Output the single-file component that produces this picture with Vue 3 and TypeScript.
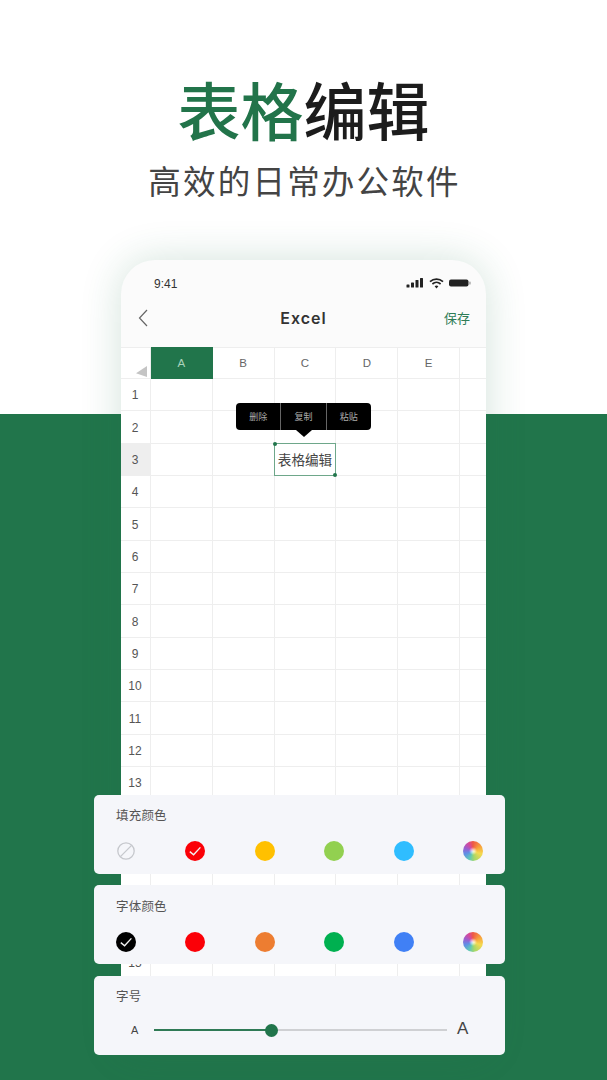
<script setup lang="ts">
const columns = ['', 'A', 'B', 'C', 'D', 'E', '']
const rows = ['1', '2', '3', '4', '5', '6', '7', '8', '9', '10', '11', '12', '13', '', '', '15', '', '']

const fillColors = ['none', '#fb0007', '#ffc000', '#92d050', '#2fbdff', 'wheel']
const fontColors = ['#000000', '#fb0007', '#ed7d31', '#00b050', '#4080f5', 'wheel']

const panels = [
  { title: '填充颜色', colors: fillColors, checked: 1 },
  { title: '字体颜色', colors: fontColors, checked: 0 },
]

const menu = ['删除', '复制', '粘贴']

function cellClass(col: number, row: string) {
  return {
    'row-head': col === 0,
    'row-active': col === 0 && row === '3',
    edge: col === 6,
  }
}
</script>

<template>
  <main class="page">
    <header class="hero">
      <h1 class="headline"><span class="accent">表格</span>编辑</h1>
      <p class="tagline">高效的日常办公软件</p>
    </header>

    <section class="phone">
      <div class="status">
        <span class="clock">9:41</span>
        <div class="status-icons">
          <svg width="18" height="10" viewBox="0 0 18 10">
            <rect x="0.5" y="6.5" width="3" height="3" rx="0.6" />
            <rect x="5" y="4.5" width="3" height="5" rx="0.6" />
            <rect x="9.5" y="2" width="3" height="7.5" rx="0.6" />
            <rect x="14" y="0" width="3" height="9.5" rx="0.6" />
          </svg>
          <svg width="15" height="11" viewBox="0 0 15 11" fill="none" stroke="#222" stroke-width="1.7">
            <path d="M1 3.6 C4.8 0.2 10.2 0.2 14 3.6" />
            <path d="M3.4 6 C5.8 3.9 9.2 3.9 11.6 6" />
            <path d="M7.5 10.4 L5.6 8.2 C6.7 7.3 8.3 7.3 9.4 8.2 Z" fill="#222" stroke="none" />
          </svg>
          <svg width="22" height="10" viewBox="0 0 22 10">
            <rect x="0" y="1.5" width="19.5" height="7" rx="2" />
            <rect x="20.3" y="3.5" width="1.3" height="3" rx="0.6" fill="#999" />
          </svg>
        </div>
      </div>

      <nav class="navbar">
        <svg class="back" width="10" height="18" viewBox="0 0 10 18" fill="none" stroke="#666" stroke-width="1.2">
          <path d="M9 1 L1.5 9 L9 17" />
        </svg>
        <span class="nav-title">Excel</span>
        <span class="save">保存</span>
      </nav>

      <div class="sheet">
        <div
          v-for="(col, i) in columns"
          :key="'h' + i"
          class="cell col-head"
          :class="{ 'col-active': col === 'A', edge: i === 6 }"
        >
          <span v-if="i === 0" class="corner"></span>
          {{ col }}
        </div>
        <template v-for="(row, r) in rows" :key="r">
          <div
            v-for="(col, i) in columns"
            :key="r + '-' + i"
            class="cell"
            :class="cellClass(i, row)"
          >
            <template v-if="i === 0">{{ row }}</template>
            <div v-else-if="col === 'C' && row === '3'" class="selected">
              <i class="handle handle-start"></i>
              表格编辑
              <i class="handle handle-end"></i>
            </div>
          </div>
        </template>

        <div class="menu">
          <span v-for="item in menu" :key="item" class="menu-item">{{ item }}</span>
          <i class="menu-arrow"></i>
        </div>
      </div>
    </section>

    <div class="panels">
      <section v-for="panel in panels" :key="panel.title" class="panel">
        <h2 class="panel-title">{{ panel.title }}</h2>
        <div class="swatches">
          <template v-for="(color, i) in panel.colors" :key="i">
            <svg v-if="color === 'none'" class="swatch" viewBox="0 0 20 20" fill="none" stroke="#c6c8cd" stroke-width="1.3">
              <circle cx="10" cy="10" r="8.2" />
              <path d="M4.4 15.6 L15.6 4.4" />
            </svg>
            <span v-else-if="color === 'wheel'" class="swatch wheel"></span>
            <span v-else class="swatch" :style="{ background: color }">
              <svg v-if="i === panel.checked" viewBox="0 0 20 20" fill="none" stroke="#f2f2f2" stroke-width="1.4">
                <path d="M4.8 10.6 L8.6 13.8 L15.4 6.4" />
              </svg>
            </span>
          </template>
        </div>
      </section>

      <section class="panel">
        <h2 class="panel-title">字号</h2>
        <div class="slider-row">
          <span class="size-small">A</span>
          <div class="track">
            <div class="track-fill"></div>
            <div class="knob"></div>
          </div>
          <span class="size-large">A</span>
        </div>
      </section>
    </div>
  </main>
</template>

<style>
html,
body {
  margin: 0;
  background: #fff;
}
</style>

<style scoped>
.page {
  position: relative;
  width: 607px;
  height: 1080px;
  overflow: hidden;
  background: linear-gradient(#fff 414px, #21754b 414px);
  font-family: "Liberation Sans", "Noto Sans CJK SC", sans-serif;
}
.hero {
  height: 260px;
  box-sizing: border-box;
  padding-top: 64px;
  display: flex;
  flex-direction: column;
  align-items: center;
  font-family: "Noto Sans CJK SC", sans-serif;
}
.headline {
  margin: 0;
  font-size: 63px;
  line-height: 88px;
  font-weight: 500;
  color: #1c1c1c;
}
.accent {
  color: #22744a;
}
.tagline {
  margin: 5px 0 0;
  font-size: 32.5px;
  line-height: 46px;
  letter-spacing: 2.2px;
  font-weight: 400;
  color: #444;
  text-indent: 2px;
}
.phone {
  width: 365px;
  margin-left: 121px;
  height: 790px;
  background: #fbfbfb;
  border-radius: 34px 34px 0 0;
  box-shadow: 0 0 40px rgba(33, 117, 75, 0.2);
  overflow: hidden;
}
.status {
  height: 48px;
  box-sizing: border-box;
  padding: 16px 15px 0 33px;
  display: flex;
  justify-content: space-between;
  align-items: flex-start;
}
.clock {
  font-size: 12px;
  line-height: 16px;
  color: #333;
}
.status-icons {
  display: flex;
  align-items: center;
  gap: 5px;
  height: 14px;
  fill: #222;
}
.navbar {
  position: relative;
  height: 39px;
  display: flex;
  align-items: center;
  justify-content: center;
}
.back {
  position: absolute;
  left: 17px;
  top: 1px;
}
.nav-title {
  font-family: Inter, "Liberation Sans", sans-serif;
  font-size: 16px;
  font-weight: 600;
  letter-spacing: 1px;
  color: #333;
  margin-top: -20px;
}
.save {
  position: absolute;
  right: 16px;
  top: 0;
  font-size: 13px;
  color: #2f7d57;
  font-family: "Noto Sans CJK SC", sans-serif;
}
.sheet {
  position: relative;
  display: grid;
  grid-template-columns: 30px repeat(5, 61.8px) 1fr;
  grid-template-rows: 32px repeat(14, 32.35px) 115px repeat(3, 32.35px);
  background: #fff;
}
.cell {
  position: relative;
  box-sizing: border-box;
  border-right: 1px solid #eeeeee;
  border-bottom: 1px solid #eeeeee;
  display: flex;
  align-items: center;
  justify-content: center;
  font-size: 12px;
  color: #555;
  min-width: 0;
}
.cell.edge {
  border-right: none;
}
.col-head {
  font-size: 11.5px;
  color: #666;
  border-top: 1px solid #eeeeee;
}
.col-active {
  background: #21754b;
  color: #a9d2ba;
  border-color: #21754b;
}
.corner {
  position: absolute;
  right: 3px;
  bottom: 1px;
  width: 11px;
  height: 11px;
  background: #c4c4c4;
  clip-path: polygon(100% 0, 100% 100%, 0 65%);
}
.row-head {
  padding: 1px 1px 0 0;
}
.row-active {
  background: #eeeeee;
}
.selected {
  position: absolute;
  inset: -1px -1px -1px -1px;
  border: 1px solid #6ea78a;
  display: flex;
  align-items: center;
  justify-content: center;
  font-family: "Noto Sans CJK SC", sans-serif;
  font-size: 13.6px;
  color: #444;
  white-space: nowrap;
  background: #fff;
  z-index: 1;
}
.handle {
  position: absolute;
  width: 4px;
  height: 4px;
  border-radius: 50%;
  background: #21754b;
}
.handle-start {
  left: -2px;
  top: -2px;
}
.handle-end {
  right: -2px;
  bottom: -2px;
}
.menu {
  position: absolute;
  left: 115px;
  top: 56px;
  width: 135px;
  height: 27px;
  display: flex;
  background: #000;
  border-radius: 4px;
  z-index: 2;
}
.menu-item {
  flex: 1;
  display: flex;
  align-items: center;
  justify-content: center;
  font-family: "Noto Sans CJK SC", sans-serif;
  font-size: 9px;
  color: #aaa;
}
.menu-item + .menu-item {
  border-left: 1px solid #666;
}
.menu-arrow {
  position: absolute;
  left: 60px;
  top: 27px;
  border-style: solid;
  border-width: 7px 8px 0 8px;
  border-color: #000 transparent transparent transparent;
}
.panels {
  position: absolute;
  left: 94px;
  top: 794.5px;
  width: 411px;
  display: flex;
  flex-direction: column;
  gap: 11.7px;
}
.panel {
  height: 79px;
  box-sizing: border-box;
  padding: 11.5px 22px 0;
  background: #f5f6fa;
  border-radius: 5px;
}
.panel-title {
  margin: 0;
  font-family: "Noto Sans CJK SC", sans-serif;
  font-size: 12.5px;
  line-height: 17px;
  font-weight: 400;
  letter-spacing: 0.2px;
  color: #555;
}
.swatches {
  margin-top: 18px;
  display: flex;
  justify-content: space-between;
}
.swatch {
  display: block;
  width: 20px;
  height: 20px;
  border-radius: 50%;
}
.swatch svg {
  display: block;
  width: 20px;
  height: 20px;
}
.wheel {
  background:
    radial-gradient(circle, rgba(255, 255, 255, 0.7) 0 1px, rgba(255, 255, 255, 0) 4px),
    conic-gradient(#ee5a45, #f8a43c 60deg, #f5d94e 110deg, #a5d86a 170deg, #5fc8b8 205deg, #5f8ee6 250deg, #9a5fd0 290deg, #d8489a 330deg, #ee5a45);
}
.slider-row {
  margin-top: 16px;
  display: flex;
  align-items: center;
  height: 20px;
  color: #444;
}
.size-small {
  width: 38px;
  padding-left: 15px;
  box-sizing: border-box;
  font-size: 11px;
}
.track {
  position: relative;
  width: 293px;
  height: 2px;
  background: #cfd0d3;
}
.track-fill {
  width: 117px;
  height: 100%;
  background: #2f7a55;
}
.knob {
  position: absolute;
  left: 110.5px;
  top: -5.5px;
  width: 13px;
  height: 13px;
  border-radius: 50%;
  background: #21754b;
}
.size-large {
  margin: -2px 0 0 10px;
  font-size: 17px;
}
</style>
